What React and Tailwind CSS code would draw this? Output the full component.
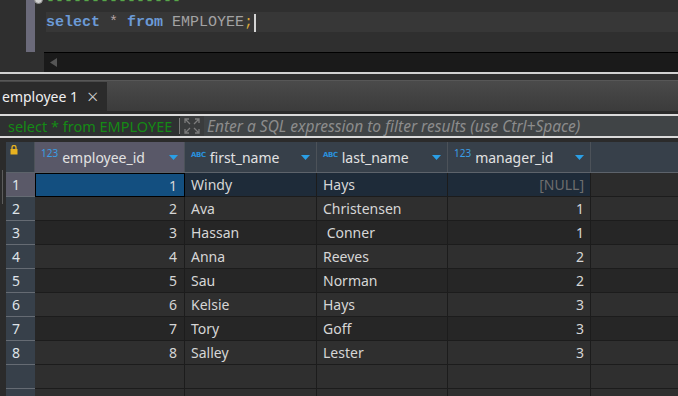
import React from "react";

const rows = [
  [1, "Windy", "Hays", null],
  [2, "Ava", "Christensen", 1],
  [3, "Hassan", "\u00a0Conner", 1],
  [4, "Anna", "Reeves", 2],
  [5, "Sau", "Norman", 2],
  [6, "Kelsie", "Hays", 3],
  [7, "Tory", "Goff", 3],
  [8, "Salley", "Lester", 3],
];

const ui = { fontFamily: '"Noto Sans", "Open Sans", sans-serif' };
const mono = { fontFamily: '"Liberation Mono", "DejaVu Sans Mono", monospace' };

function Triangle() {
  return (
    <svg width="9" height="5" viewBox="0 0 9 5" className="ml-auto shrink-0">
      <path d="M0 0 H9 L4.5 5 Z" fill="#2a9fe6" />
    </svg>
  );
}

function NumIcon() {
  return <span className="mb-[9px] mr-[4px] text-[10px] leading-none text-[#3a9ee4]">123</span>;
}

function AbcIcon() {
  return <span className="mb-[3px] mr-[4px] text-[7px] font-bold leading-none tracking-[-0.4px] text-[#2a90dc]" style={{ fontFamily: '"DejaVu Sans", sans-serif' }}>ABC</span>;
}

function HeaderCell({ icon, label, selected }) {
  return (
    <div className={`flex h-full items-center border-r border-[#4c5259] pl-[6px] pr-[6px] ${selected ? "bg-[#595868]" : "bg-[#37404a]"}`}>
      {icon === "num" ? <NumIcon /> : <AbcIcon />}
      <span className="text-[14px] text-[#e2e2e2]">{label}</span>
      <Triangle />
    </div>
  );
}

function Lock() {
  return (
    <svg width="8" height="10" viewBox="0 0 8 10">
      <path d="M2 4 V2.5 A2 2 0 0 1 6 2.5 V4" stroke="#e8b220" strokeWidth="1.3" fill="none" />
      <rect x="0.5" y="4" width="7" height="5.5" fill="#e8b220" />
    </svg>
  );
}

function ExpandIcon() {
  return (
    <svg width="16" height="16" viewBox="0 0 16 16" fill="none" stroke="#7c7c7c" strokeWidth="1.3">
      <path d="M1 5 V1 H5 M1 1 L6 6" />
      <path d="M11 1 H15 V5 M15 1 L10 6" />
      <path d="M1 11 V15 H5 M1 15 L6 10" />
      <path d="M15 11 V15 H11 M15 15 L10 10" />
    </svg>
  );
}

function DataRow({ idx, row }) {
  const sel = idx === 0;
  const bg = sel ? "bg-[#1e2b39]" : idx % 2 === 1 || idx >= 7 ? "bg-[#2f2f2f]" : "bg-[#262626]";
  const [id, first, last, mgr] = row || [];
  return (
    <div className="grid h-[24px] grid-cols-[29px_150px_132px_131px_143px_1fr] text-[14px] text-[#d6d6d6]">
      <div className={`flex items-center border-b border-[#656b73] pl-[6px] text-[#dfe3e8] ${sel ? "bg-[#5a5968]" : "bg-[#37404a]"}`}>
        {id}
      </div>
      <div className={`flex items-center justify-end pr-[7px] ${sel ? "border border-black bg-[#134f80]" : `border-b border-r border-[#1c1c1c] ${bg}`}`}>
        {id}
      </div>
      <div className={`flex items-center border-b border-r border-[#1c1c1c] pl-[6px] ${bg}`}>{first}</div>
      <div className={`flex items-center whitespace-pre border-b border-r border-[#1c1c1c] pl-[6px] ${bg}`}>{last}</div>
      <div className={`flex items-center justify-end border-b border-r border-[#1c1c1c] pr-[6px] ${bg} ${mgr === null ? "text-[#6e6e6e]" : ""}`}>
        {row ? (mgr === null ? "[NULL]" : mgr) : ""}
      </div>
      <div className={`border-b border-[#1c1c1c] ${sel ? "bg-[#2c2c2c]" : bg}`} />
    </div>
  );
}

export default function App() {
  return (
    <div className="h-[396px] w-[678px] overflow-hidden bg-[#2f2f2f]" style={ui}>
      {/* editor */}
      <div className="flex h-[52px] overflow-hidden">
        <div className="w-[26px]" />
        <div className="w-[9px] bg-[#6b6a7a]" />
        <div className="relative w-[11px]">
          <div className="absolute left-[-1px] top-[-5px] h-[9px] w-[9px] rounded-full border border-[#8a8a8a] bg-[#cfcfcf]" />
        </div>
        <div className="flex-1 overflow-hidden text-[15px]" style={mono}>
          <div className="mt-[-8px] h-[20px] leading-[20px] text-[#57a64a]">---------------</div>
          <div className="flex h-[20px] items-center bg-[#373737] pt-[2px] leading-[20px]">
            <span className="font-bold text-[#6b9ad6]">select</span>
            <span className="text-[#b4a2a2]">&nbsp;*&nbsp;</span>
            <span className="font-bold text-[#6b9ad6]">from</span>
            <span className="text-[#a3a3a3]">&nbsp;EMPLOYEE</span>
            <span className="text-[#d9a83a]">;</span>
            <span className="ml-[1px] h-[18px] w-[2px] bg-[#d4d4d4]" />
          </div>
        </div>
      </div>
      <div className="flex h-[20px]">
        <div className="w-[44px]" />
        <div className="flex flex-1 items-center border-t border-black bg-[#1a1a1a] pl-[6px]">
          <svg width="7" height="9" viewBox="0 0 7 9">
            <path d="M7 0 V9 L0 4.5 Z" fill="#555" />
          </svg>
        </div>
      </div>
      <div className="h-[2px] bg-[#d2d2d2]" />
      <div className="h-[6px]" />

      {/* tabs */}
      <div className="flex h-[31px] border-t border-[#575757] bg-gradient-to-b from-[#4a4a4a] to-[#3b3b3b]">
        <div className="mt-[1px] flex w-[107px] items-center bg-[#2b2b2b] pl-[2px] text-[14px] text-[#f0f0f0]">
          employee 1
          <span className="ml-[9px] text-[20px] font-light leading-none text-[#d0d0d0]">×</span>
        </div>
      </div>
      <div className="h-[3px] bg-[#2b2b2b]" />
      <div className="h-[2px] bg-[#dadada]" />

      {/* filter */}
      <div className="flex h-[20px] items-center text-[14.5px] leading-[20px]">
        <div className="flex h-full w-[179px] items-center bg-[#2e3131] pl-[8px] text-[#158a15]">select * from EMPLOYEE</div>
        <div className="h-[16px] w-[1px] bg-[#7a7a7a]" />
        <div className="flex h-full w-[24px] items-center justify-center bg-[#3a3c3d]">
          <ExpandIcon />
        </div>
        <div className="flex h-full flex-1 items-center whitespace-nowrap bg-[#404446] pl-[3px] text-[15.5px] italic leading-[20px] text-[#8c8c8c]">
          Enter a SQL expression to filter results (use Ctrl+Space)
        </div>
      </div>
      <div className="h-[2px] bg-[#dadada]" />
      <div className="h-[4px] bg-[#2b2b2b]" />

      {/* grid */}
      <div className="flex">
        <div className="w-[6px] bg-[#2b2b2b]">
          <div className="ml-[2px] mt-[28px] h-[34px] w-[1px] bg-[#5c5c5c]" />
        </div>
        <div className="flex-1">
          <div className="grid h-[31px] grid-cols-[29px_150px_132px_131px_143px_1fr] border-b border-[#5d636b]">
            <div className="flex h-full items-start border-r border-[#4c5259] bg-[#37404a] pl-[4px] pt-[3px]">
              <Lock />
            </div>
            <HeaderCell icon="num" label="employee_id" selected />
            <HeaderCell icon="abc" label="first_name" />
            <HeaderCell icon="abc" label="last_name" />
            <HeaderCell icon="num" label="manager_id" />
            <div className="bg-[#37404a]" />
          </div>
          {rows.map((r, i) => (
            <DataRow key={i} idx={i} row={r} />
          ))}
          <DataRow idx={8} />
          <DataRow idx={9} />
        </div>
      </div>
    </div>
  );
}
